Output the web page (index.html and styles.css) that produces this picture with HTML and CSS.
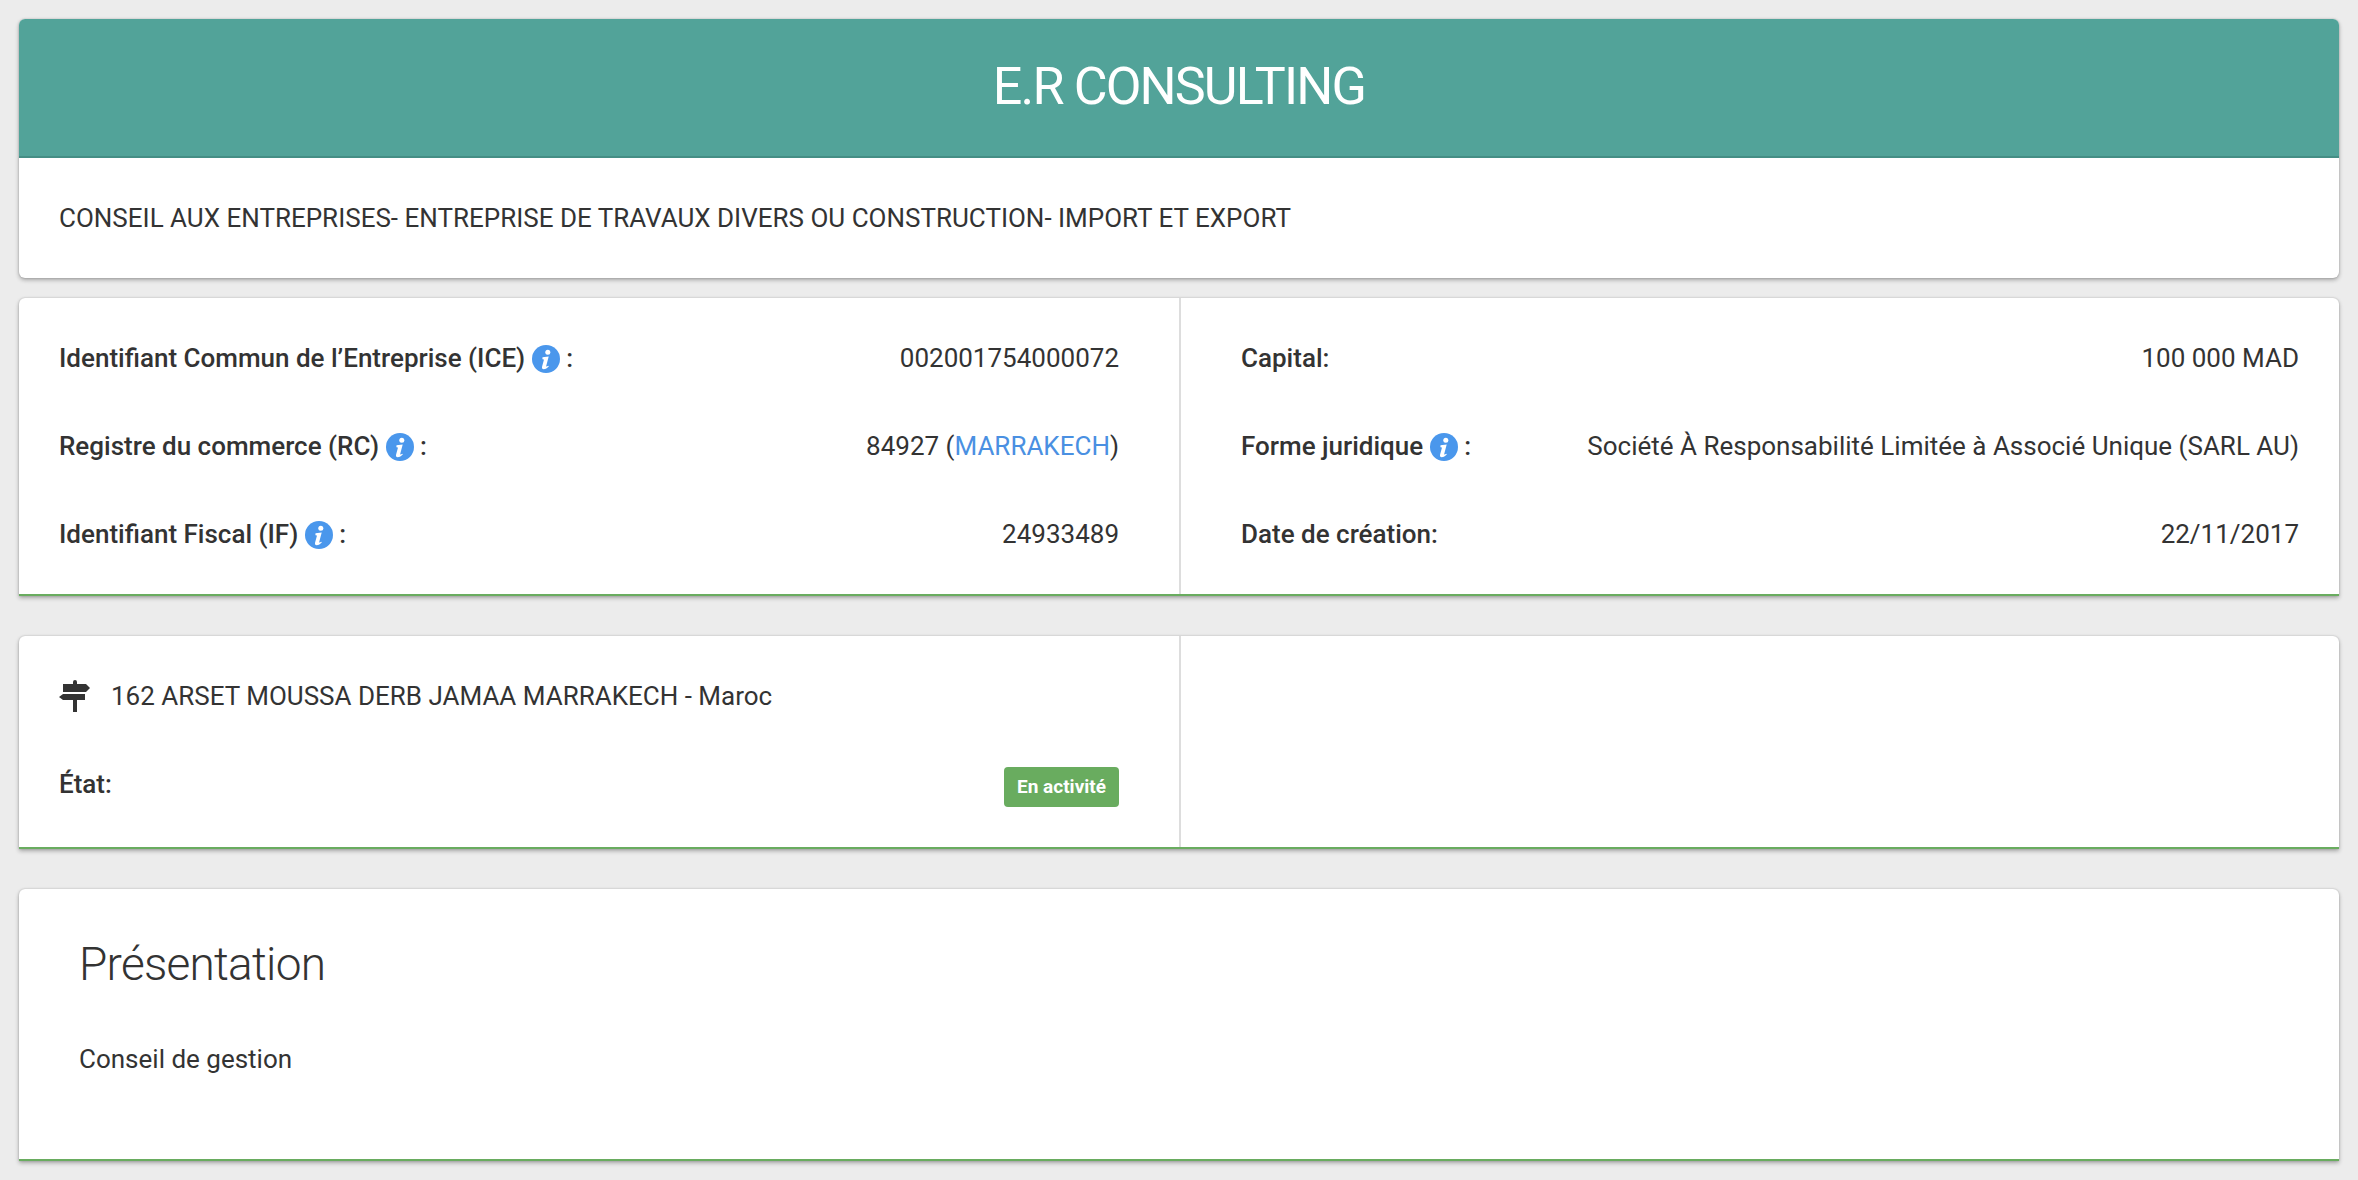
FILE: index.html
```html
<!DOCTYPE html>
<html lang="fr">
<head>
<meta charset="utf-8">
<title>E.R CONSULTING</title>
<link rel="stylesheet" href="styles.css">
</head>
<body>
<div class="card head-card">
  <h1 class="title">E.R CONSULTING</h1>
  <p class="activity">CONSEIL AUX ENTREPRISES- ENTREPRISE DE TRAVAUX DIVERS OU CONSTRUCTION- IMPORT ET EXPORT</p>
</div>
<div class="card green split">
  <div class="col">
    <div class="row"><span class="label">Identifiant Commun de l’Entreprise (ICE) <svg class="info" viewBox="0 0 28 28"><use href="#i"/></svg> :</span><span>002001754000072</span></div>
    <div class="row"><span class="label">Registre du commerce (RC) <svg class="info" viewBox="0 0 28 28"><use href="#i"/></svg> :</span><span>84927 (<a class="link" href="#">MARRAKECH</a>)</span></div>
    <div class="row"><span class="label">Identifiant Fiscal (IF) <svg class="info" viewBox="0 0 28 28"><use href="#i"/></svg> :</span><span>24933489</span></div>
  </div>
  <div class="col">
    <div class="row"><span class="label">Capital:</span><span>100 000 MAD</span></div>
    <div class="row"><span class="label">Forme juridique <svg class="info" viewBox="0 0 28 28"><use href="#i"/></svg> :</span><span>Société À Responsabilité Limitée à Associé Unique (SARL AU)</span></div>
    <div class="row"><span class="label">Date de création:</span><span>22/11/2017</span></div>
  </div>
</div>
<div class="card green split">
  <div class="col">
    <div class="row"><span class="address"><svg class="sign" viewBox="0 0 32 32"><path d="M14 2a2 2 0 0 1 4 0v2h9l4 4-4 4H4V4h10zM4 14h22v6h-8v12h-4V20H4l-4-3z"/></svg>162 ARSET MOUSSA DERB JAMAA MARRAKECH - Maroc</span></div>
    <div class="row"><span class="label">État:</span><span class="badge">En activité</span></div>
  </div>
  <div class="col"></div>
</div>
<div class="card green about">
  <h2 class="about-title">Présentation</h2>
  <p class="about-text">Conseil de gestion</p>
</div>
<svg class="defs" width="0" height="0"><defs><g id="i"><circle cx="14" cy="14" r="14" fill="#4a97ec"/><circle cx="15.800" cy="7.300" r="2.500" fill="#fff"/><path d="M10.500 12.300l6.200-.9-2.500 9.600c-.2.800.5.900 2.200-.2l.4.8c-2.200 2.100-3.700 2.700-5 2.700-1.600 0-2.100-1.100-1.700-2.700l1.700-6.400c.2-.8-.2-1-1.400-1z" fill="#fff"/></g></defs></svg>
</body>
</html>
```
FILE: styles.css
```css
* { box-sizing: border-box; }
html, body { height: 100%; }
body {
  margin: 0;
  padding: 19px 19px 0;
  background: #ececec;
  font-family: Roboto, "Liberation Sans", sans-serif;
  font-size: 26px;
  line-height: 32px;
  color: #333;
}
.card {
  background: #fff;
  border-radius: 6px;
  box-shadow: 0 2px 4px rgba(0,0,0,.3), 0 0 2px rgba(0,0,0,.2);
  overflow: hidden;
}
.head-card { height: 259px; margin-bottom: 20px; }
.title {
  margin: 0;
  height: 139px;
  background: #52a399;
  border-bottom: 2px solid #458e85;
  color: #fff;
  font-size: 52px;
  font-weight: 400;
  letter-spacing: -1.850px;
  line-height: 135px;
  text-align: center;
}
.activity { margin: 0; padding: 44px 40px; }
.green { border-bottom: 2px solid #69ac5f; border-radius: 6px 6px 0 0; }
.split {
  display: grid;
  grid-template-columns: calc(50% + 2px) 1fr;
  margin-bottom: 40px;
  min-height: 298px;
}
.split + .split { min-height: 213px; }
.col { padding: 44px 40px 29px; display: flex; flex-direction: column; gap: 56px; }
.col:first-child { border-right: 2px solid #ddd; padding-right: 60px; }
.col:last-child { padding-left: 60px; }
.row { display: flex; justify-content: space-between; align-items: center; height: 32px; }
.label { font-weight: 500; }
.info { width: 28px; height: 28px; vertical-align: -6px; }
.link { color: #4a90e2; text-decoration: none; }
.address { display: flex; align-items: center; gap: 20px; }
.sign { width: 32px; height: 32px; fill: #333; }
.badge {
  margin-top: 6px;
  background: #69ac5f;
  color: #fff;
  border-radius: 4px;
  font-size: 19px;
  font-weight: 700;
  line-height: 24px;
  padding: 8px 13px;
  height: 40px;
}
.about { height: 272px; padding: 47px 60px; }
.about-title { margin: 0 0 51px; font-size: 46px; font-weight: 300; letter-spacing: -.750px; line-height: 56px; }
.about-text { margin: 0; }
.defs { position: absolute; }
```
